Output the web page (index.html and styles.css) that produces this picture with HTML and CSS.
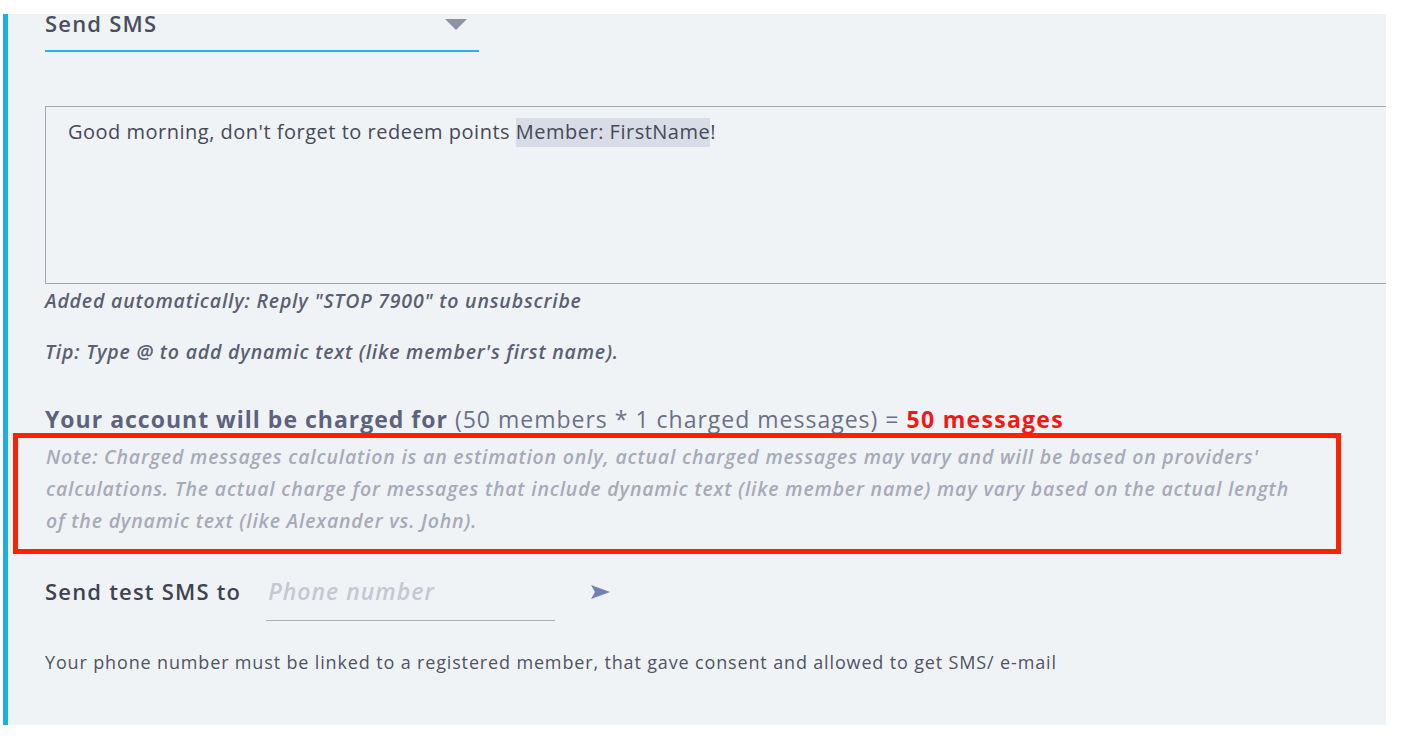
FILE: index.html
```html
<!DOCTYPE html>
<html lang="en">
<head>
<meta charset="UTF-8" />
<meta name="viewport" content="width=device-width, initial-scale=1.0" />
<title>Send SMS</title>
<link rel="stylesheet" href="styles.css">
</head>
<body>

<!-- SMS campaign step -->
<div class="panel">

  <div class="channel-select">
    <span>Send SMS</span>
    <span class="caret"></span>
  </div>

  <div class="message-box">
    Good morning, don't forget to redeem points <span class="tag">Member: FirstName</span>!
  </div>

  <p class="hint">Added automatically: Reply "STOP 7900" to unsubscribe</p>
  <p class="hint tip">Tip: Type @ to add dynamic text (like member's first name).</p>

  <div class="charge">
    <b>Your account will be charged for</b> (50 members * 1 charged messages) = <span class="total">50 messages</span>
  </div>

  <div class="note">
    Note: Charged messages calculation is an estimation only, actual charged messages may vary and will be based on providers'<br>
    calculations. The actual charge for messages that include dynamic text (like member name) may vary based on the actual length<br>
    of the dynamic text (like Alexander vs. John).
    <div class="mark"></div>
  </div>

  <div class="test-row">
    <label for="phone">Send test SMS to</label>
    <input id="phone" type="text" placeholder="Phone number" />
    <button class="send" type="button">
      <svg width="19" height="14" viewBox="0 0 19 14"><polygon points="0,0 19,7 0,14 4,7" fill="#6f80b6"/></svg>
    </button>
  </div>

  <p class="footnote">Your phone number must be linked to a registered member, that gave consent and allowed to get SMS/ e-mail</p>

</div>

</body>
</html>
```

FILE: styles.css
```css
body {
  margin: 0;
  padding: 0;
  background: #ffffff;
  font-family: "Open Sans", "Liberation Sans", sans-serif;
}
/* main panel */
.panel {
  margin: 14px 0 0 3px;
  width: 1383px;
  height: 711px;
  box-sizing: border-box;
  border-left: 5px solid #1cb0e0;
  background: #eff3f6;
  padding-left: 37px;
  position: relative;
}
/* channel dropdown */
.channel-select {
  width: 434px;
  height: 38px;
  box-sizing: border-box;
  border-bottom: 2px solid #2ab4e3;
  display: flex;
  justify-content: space-between;
  font-size: 22px;
  font-weight: 600;
  line-height: 18px;
  letter-spacing: 1.2px;
  color: #4a4f5f;
}
.caret {
  width: 0;
  height: 0;
  margin: 5px 12px 0 0;
  border-left: 11px solid transparent;
  border-right: 11px solid transparent;
  border-top: 11px solid #8e92a5;
}
/* message text */
.message-box {
  margin-top: 54px;
  width: 1341px;
  height: 178px;
  box-sizing: border-box;
  border: 1px solid #a3a7b4;
  border-right: none;
  padding: 11px 22px;
  font-size: 20px;
  line-height: 28px;
  letter-spacing: 0.5px;
  color: #454a57;
}
.tag {
  background: #d8dce6;
  padding: 0 0 2px;
}
.hint {
  margin: 5px 0 0;
  font-size: 19.5px;
  font-style: italic;
  font-weight: 600;
  line-height: 24px;
  letter-spacing: 0.8px;
  color: #5b5f72;
}
.tip {
  margin-top: 27px;
}
/* charge summary */
.charge {
  margin-top: 40px;
  font-size: 23px;
  line-height: 30px;
  letter-spacing: 1px;
  color: #6b7087;
}
.charge b {
  font-weight: 700;
  color: #5d627d;
}
.total {
  font-weight: 700;
  letter-spacing: 1.3px;
  color: #fb1414;
}
.note {
  position: relative;
  margin-top: 7px;
  padding-left: 1px;
  font-size: 19.5px;
  font-style: italic;
  font-weight: 600;
  line-height: 32px;
  letter-spacing: 0.8px;
  color: #a7aab9;
}
/* annotation frame on top of the note */
.mark {
  position: absolute;
  left: -32px;
  top: -8px;
  width: 1328px;
  height: 121px;
  box-sizing: border-box;
  border: 5px solid #ff2200;
}
/* test sms */
.test-row {
  margin-top: 39px;
  display: flex;
  align-items: flex-start;
}
.test-row label {
  font-size: 22px;
  font-weight: 600;
  line-height: 30px;
  letter-spacing: 1.2px;
  color: #3f4351;
  margin-right: 25px;
}
.test-row input {
  width: 289px;
  height: 45px;
  box-sizing: border-box;
  padding: 0 0 14px 2px;
  border: none;
  border-bottom: 1px solid #a9adbb;
  background: transparent;
  font-family: "Open Sans", sans-serif;
  font-size: 23px;
  letter-spacing: 1px;
  outline: none;
}
.test-row input::placeholder {
  font-style: italic;
  font-weight: 600;
  color: #c5c8d3;
}
.send {
  margin: 9px 0 0 36px;
  padding: 0;
  border: none;
  background: none;
  cursor: pointer;
}
.footnote {
  margin: 29px 0 0;
  font-size: 18px;
  line-height: 24px;
  letter-spacing: 0.85px;
  color: #4f5364;
}
```
